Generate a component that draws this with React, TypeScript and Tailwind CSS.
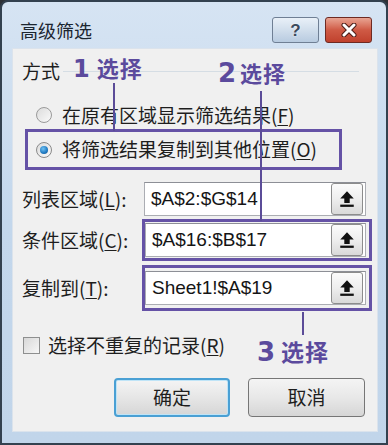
import React from 'react';

const cjk = "font-['Noto_Sans_CJK_SC',sans-serif]";
const mono = "font-['Liberation_Sans','Noto_Sans_CJK_SC',sans-serif]";
const digit = "font-['DejaVu_Sans',sans-serif] font-bold";

const UploadButton: React.FC = () => (
  <div className="w-[32px] h-[32px] rounded-[3px] border border-[#8c8c8c] bg-gradient-to-b from-[#fbfbfb] via-[#eeeeee] to-[#d9d9d9] flex items-center justify-center">
    <svg width="18" height="18" viewBox="0 0 16 16">
      <path d="M8 1 L14 7.6 H10.4 V11.6 H5.6 V7.6 H2 Z" fill="#111" />
      <rect x="2" y="13" width="12" height="2" fill="#111" />
    </svg>
  </div>
);

const RangeInput: React.FC<{ value: string; width: string }> = ({ value, width }) => (
  <div className={`${width} h-[34px] bg-white border border-[#abadb3] border-t-[#8d8f96] flex items-center justify-between pl-[6px] pr-[2px]`}>
    <span className={`${mono} text-[19px] text-[#151515]`}>{value}</span>
    <UploadButton />
  </div>
);

const Label: React.FC<{ text: string; acc: string; width: string }> = ({ text, acc, width }) => (
  <span className={`${cjk} ${width} text-[19px] text-[#1e1e1e] leading-6`}>
    {text}(<u className="underline-offset-2">{acc}</u>):
  </span>
);

const App: React.FC = () => {
  return (
    <div className="w-[388px] h-[445px] bg-[#2e3136]">
      <div className="relative w-full h-full flex flex-col rounded-t-[8px] border-2 border-[#33414f] bg-gradient-to-b from-[#d6e4f3] via-[#c3d7ec] to-[#c1d5ea]">
        {/* title bar */}
        <div className="h-[46px] flex items-center justify-between pl-[18px] pr-[14px] pt-[10px]">
          <span className={`${cjk} text-[18px] text-[#1b2530]`}>高级筛选</span>
          <div className="flex gap-[6px]">
            <div className="w-[47px] h-[26px] rounded-[3px] border border-[#6f7f94] bg-gradient-to-b from-[#e9f0f8] via-[#d1deec] to-[#b8cbe0] flex items-center justify-center">
              <span className="font-['Liberation_Sans',sans-serif] font-bold text-[17px] leading-none text-[#3a4a5c] [text-shadow:0_0_2px_#fff]">?</span>
            </div>
            <div className="w-[47px] h-[26px] rounded-[3px] border border-[#6e2a22] bg-gradient-to-b from-[#e8a493] via-[#cf5a45] to-[#c0412d] flex items-center justify-center">
              <svg width="18" height="14" viewBox="0 0 18 14">
                <path d="M4 2 L14 12 M14 2 L4 12" stroke="#4a1c16" strokeWidth="5" strokeLinecap="round" />
                <path d="M4 2 L14 12 M14 2 L4 12" stroke="#fff" strokeWidth="3" strokeLinecap="round" />
              </svg>
            </div>
          </div>
        </div>

        {/* body */}
        <div className="flex-1 pl-[10px] pr-[8px] pb-[11px]">
          <div className="relative h-full bg-[#f0f0f0] border border-[#dbe3ec] flex flex-col">
            {/* group: 方式 */}
            <div className="mt-[10px] flex items-center h-6 pl-[9px] pr-[18px]">
              <span className={`${cjk} text-[19px] text-[#1e1e1e]`}>方式</span>
              <div className="flex-1 ml-[3px] h-px bg-[#d5dde4]" />
            </div>

            <div className="mt-[20px] h-6 flex items-center pl-[23px]">
              <span className="w-[16px] h-[16px] rounded-full border border-[#9a9a9a] bg-gradient-to-br from-[#dcdcdc] to-[#fafafa]" />
              <span className={`${cjk} ml-[10px] text-[19px] text-[#1e1e1e]`}>
                在原有区域显示筛选结果(<u className="underline-offset-2">F</u>)
              </span>
            </div>

            <div className="mt-[2px] ml-[12px] w-[317px] h-[41px] border-[3px] border-[#6552a6] flex items-center pl-[8px]">
              <span className="w-[16px] h-[16px] rounded-full border border-[#8a8a8a] bg-gradient-to-br from-[#dcdcdc] to-[#fafafa] flex items-center justify-center">
                <span className="w-[8px] h-[8px] rounded-full bg-[radial-gradient(circle_at_40%_35%,#6fc3f5,#1f78c0_60%,#0e4f86)]" />
              </span>
              <span className={`${cjk} ml-[10px] text-[19px] text-[#1e1e1e]`}>
                将筛选结果复制到其他位置(<u className="underline-offset-2">O</u>)
              </span>
            </div>

            {/* ranges */}
            <div className="mt-[12px] flex items-center pl-[9px]">
              <Label text="列表区域" acc="L" width="w-[122px]" />
              <RangeInput value="$A$2:$G$14" width="w-[222px]" />
            </div>

            <div className="mt-[3px] flex items-center pl-[9px]">
              <Label text="条件区域" acc="C" width="w-[120px]" />
              <div className="w-[230px] border-[3px] border-[#6552a6] py-[1px] pr-[3px]">
                <RangeInput value="$A$16:$B$17" width="w-[221px]" />
              </div>
            </div>

            <div className="mt-[4px] flex items-center pl-[9px]">
              <Label text="复制到" acc="T" width="w-[120px]" />
              <div className="w-[230px] border-[3px] border-[#6552a6] py-[3px] pr-[3px]">
                <RangeInput value="Sheet1!$A$19" width="w-[221px]" />
              </div>
            </div>

            {/* checkbox */}
            <div className="mt-[22px] h-6 flex items-center pl-[10px]">
              <span className="w-[17px] h-[17px] border border-[#8e8f8f] bg-gradient-to-br from-[#d8d8d8] to-[#f7f7f7]" />
              <span className={`${cjk} ml-[8px] text-[19px] text-[#1e1e1e]`}>
                选择不重复的记录(<u className="underline-offset-2">R</u>)
              </span>
            </div>

            {/* buttons */}
            <div className="mt-[21px] flex justify-end gap-[18px] pr-[12px]">
              <button className={`${cjk} w-[116px] h-[39px] rounded-[4px] border-2 border-[#4aa0d4] bg-gradient-to-b from-[#f4f4f4] via-[#e6e6e6] to-[#d6d6d6] text-[19px] text-[#1e1e1e] shadow-[inset_0_0_0_1px_#bfe4f7]`}>
                确定
              </button>
              <button className={`${cjk} w-[117px] h-[39px] rounded-[4px] border border-[#767676] bg-gradient-to-b from-[#f4f4f4] via-[#e8e8e8] to-[#d6d6d6] text-[19px] text-[#1e1e1e]`}>
                取消
              </button>
            </div>

            {/* annotation callouts */}
            <div className="absolute left-[100px] top-[34px] w-[2px] h-[48px] bg-[#5b4c98]" />
            <div className="absolute left-[247px] top-[42px] w-[2px] h-[130px] bg-[#5b4c98]" />
            <div className="absolute left-[289px] top-[263px] w-[2px] h-[23px] bg-[#5b4c98]" />

            <div className={`absolute left-[60px] top-[7px] flex items-baseline gap-[7px] ${cjk} font-bold text-[#5b4a9d] leading-none`}>
              <span className={`${digit} text-[24px]`}>1</span>
              <span className="text-[22px] tracking-[1px]">选择</span>
            </div>
            <div className={`absolute left-[205px] top-[11px] flex items-baseline gap-[4px] ${cjk} font-bold text-[#5b4a9d] leading-none`}>
              <span className={`${digit} text-[26px]`}>2</span>
              <span className="text-[22px] tracking-[1px]">选择</span>
            </div>
            <div className={`absolute left-[244px] top-[290px] flex items-baseline gap-[6px] ${cjk} font-bold text-[#5b4a9d] leading-none`}>
              <span className={`${digit} text-[26px]`}>3</span>
              <span className="text-[23px] tracking-[1px]">选择</span>
            </div>
          </div>
        </div>
      </div>
    </div>
  );
};

export default App;
